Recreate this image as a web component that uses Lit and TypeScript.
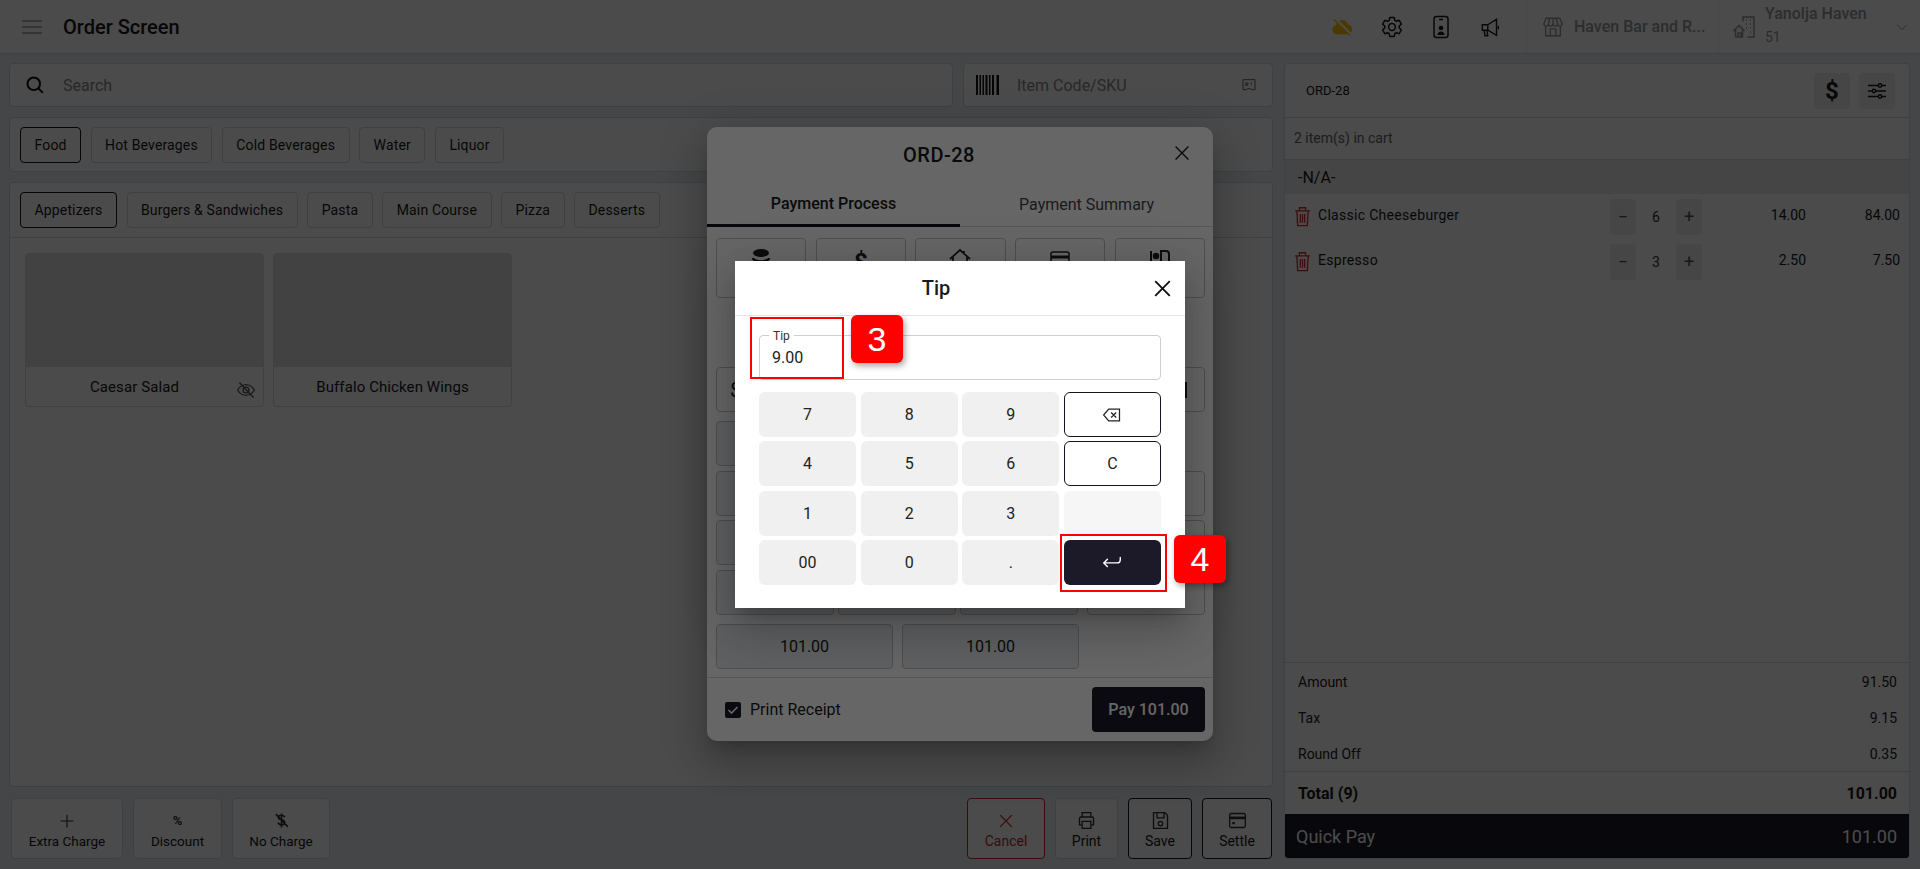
import { LitElement, css, html, svg } from "lit";
import { customElement } from "lit/decorators.js";

const icon = (size: number, body: unknown, cls = "") =>
  html`<svg class=${cls} width=${size} height=${size} viewBox="0 0 24 24" fill="none" stroke="currentColor" stroke-width="1.5">${body}</svg>`;

const gear = svg`<path d="M19.14 12.94c.04-.3.06-.61.06-.94 0-.32-.02-.64-.07-.94l2.03-1.58c.18-.14.23-.41.12-.61l-1.92-3.32c-.12-.22-.37-.29-.59-.22l-2.39.96c-.5-.38-1.03-.7-1.62-.94l-.36-2.54c-.04-.24-.24-.41-.48-.41h-3.84c-.24 0-.43.17-.47.41l-.36 2.54c-.59.24-1.13.57-1.62.94l-2.39-.96c-.22-.08-.47 0-.59.22L2.74 8.87c-.12.21-.08.47.12.61l2.03 1.58c-.05.3-.09.63-.09.94s.02.64.07.94l-2.03 1.58c-.18.14-.23.41-.12.61l1.92 3.32c.12.22.37.29.59.22l2.39-.96c.5.38 1.03.7 1.62.94l.36 2.54c.05.24.24.41.48.41h3.84c.24 0 .44-.17.47-.41l.36-2.54c.59-.24 1.13-.56 1.62-.94l2.39.96c.22.08.47 0 .59-.22l1.92-3.32c.12-.22.07-.47-.12-.61l-2.01-1.58z"/><circle cx="12" cy="12" r="3.4"/>`;
const cloudOff = svg`<path fill="currentColor" stroke="none" d="M6.5 20a5 5 0 0 1-1.2-9.85A7 7 0 0 1 12 4.5a6.6 6.6 0 0 1 6.3 4.6A5.5 5.5 0 0 1 18 20z"/><path d="M4 2.5 21.500 20" stroke="#fff" stroke-width="3"/><path d="M3 3.500 20.500 21" stroke-width="1.400"/>`;
const phone = svg`<rect x="5" y="1.5" width="14" height="21" rx="2.5"/><path d="M10 4.5h4"/><circle cx="12" cy="13" r="1.6" fill="currentColor"/><path d="M8.5 20c0-2.4 1.4-3.6 3.5-3.6s3.5 1.2 3.5 3.6z" fill="currentColor" stroke="none"/>`;
const megaphone = svg`<path d="M2.5 9.5h6v6h-6zM8.5 9.5 18 3.5v17.5l-9.5-5.5M20 10.5v4M4.5 15.5l1 6h3l-1-6"/>`;
const store = svg`<path d="M4 11v10.500h16V11M2 8.500 4.500 2.500h15L22 8.500a2.500 2.500 0 0 1-5 0 2.500 2.500 0 0 1-5 0 2.500 2.500 0 0 1-5 0 2.500 2.500 0 0 1-5 0zM7 8.500 8.500 2.500M12 8.500v-6M17 8.500l-1.500-6M9 21.500V14h6v7.500"/>`;
const building = svg`<path d="M1.500 16 7 10.500l5.500 5.500M3.500 14.500v7.500h7v-7.500M11 6.500V2h11v20h-6.500M14 5h1M18 5h1M14 9h1M18 9h1M14 13h1M18 13h1M18 17h1M6 22v-4h3v4"/>`;
const chevron = svg`<path d="m5 9 7 7 7-7"/>`;
const search = svg`<circle cx="10.500" cy="10.500" r="7.500" stroke-width="2.400"/><path d="m16 16 5.500 5.500" stroke-width="2.400"/>`;
const ticket = svg`<path d="M3 4h18v15h-5.500l-1-1.500h-5l-1 1.500H3z"/><path d="m8.500 8 .8 1.700 1.800.2-1.300 1.200.3 1.800-1.600-.9-1.600.9.300-1.800L5.900 9.900l1.800-.2zM15.500 8v3M15.500 13v.5"/>`;
const sliders = svg`<path d="M3 6.500h18M3 12h18M3 17.500h18"/><circle cx="15" cy="6.500" r="1.700" fill="#efefef"/><circle cx="9" cy="12" r="1.700" fill="#efefef"/><circle cx="15" cy="17.500" r="1.700" fill="#efefef"/>`;
const trash = svg`<path d="M3.500 5.500h17M8.500 5.500V2h7v3.500M5.500 5.500l1 17h11l1-17M9.500 9v10M12 9v10M14.500 9v10"/>`;
const eyeOff = svg`<path d="M2 12s3.600-6.500 10-6.500S22 12 22 12s-3.600 6.500-10 6.500S2 12 2 12z"/><circle cx="12" cy="12" r="3.500"/><path d="m4 3 17 18"/>`;
const plus = svg`<path d="M12 3.500v17M3.500 12h17"/>`;
const xMark = svg`<path d="m5 5 14 14M19 5 5 19"/>`;
const noDollar = svg`<path d="M16.500 7.500C16 5.500 14.300 4.500 12 4.500c-2.500 0-4.300 1.300-4.300 3.200 0 1.900 1.600 2.700 4.300 3.300 3 .7 4.500 1.700 4.500 3.800 0 2-1.900 3.300-4.500 3.300-2.500 0-4.200-1.100-4.800-3.200M12 2v20M4 3l17 18" stroke-width="2.200"/>`;
const printer = svg`<path d="M7 8V3h10v5M7 17H4V9.500A1.500 1.500 0 0 1 5.500 8h13A1.500 1.500 0 0 1 20 9.500V17h-3M7 13h10v8H7z"/>`;
const floppy = svg`<path d="M4 3h13l3 3v15H4zM8 3v6h8V3"/><circle cx="12" cy="15.500" r="2.500"/>`;
const card = svg`<rect x="3" y="4" width="18" height="16" rx="2"/><path d="M3 9h18" stroke-width="3"/><path d="M6 15h3" stroke-width="2.500"/>`;
const backspace = svg`<path d="M8 5h13v14H8l-6-7zM11 9l6 6M17 9l-6 6"/>`;
const enter = svg`<path d="M21 7v2.500a3.500 3.500 0 0 1-3.500 3.500H3M7 9l-4 4 4 4" stroke-linecap="round"/>`;
const coins = svg`<ellipse cx="12" cy="5" rx="8" ry="4" fill="currentColor" stroke="none"/><path d="M4 10c0 2 3.500 3.500 8 3.500s8-1.500 8-3.500M4 14c0 2 3.500 3.500 8 3.500s8-1.500 8-3.500" stroke-width="2.500"/>`;
const house = svg`<path d="M2 11 12 2l10 9M5 9v12h14V9M9 15h6M16 3v3" stroke-width="1.700"/>`;
const tableIcon = svg`<path d="M3 3v18M13 3h5a3 3 0 0 1 3 3v15h-8z" stroke-width="2"/><circle cx="8" cy="8" r="2.500" fill="currentColor"/>`;

const categories = ["Food", "Hot Beverages", "Cold Beverages", "Water", "Liquor"];
const subCategories = ["Appetizers", "Burgers & Sandwiches", "Pasta", "Main Course", "Pizza", "Desserts"];
const cartItems = [
  { name: "Classic Cheeseburger", qty: 6, price: "14.00", total: "84.00" },
  { name: "Espresso", qty: 3, price: "2.50", total: "7.50" },
];
const summary = [
  ["Amount", "91.50"],
  ["Tax", "9.15"],
  ["Round Off", "0.35"],
];

@customElement("app-root")
export class AppRoot extends LitElement {
  static styles = css`
    :host {
      display: block;
      position: relative;
      width: 1920px;
      height: 869px;
      overflow: hidden;
      background: #ebeff3;
      font-family: Roboto, "Liberation Sans", sans-serif;
      font-size: 14px;
      color: #1a1a1a;
    }

    svg {
      display: block;
      flex: none;
    }

    .topbar {
      height: 54px;
      box-sizing: border-box;
      background: #fff;
      border-bottom: 1px solid #d8dadc;
      display: flex;
      align-items: center;
      padding-left: 21px;
    }

    .menu {
      color: #666;
    }

    .title {
      font-size: 20px;
      font-weight: 500;
      margin-left: 20px;
      flex: 1;
    }

    .top-icons {
      display: flex;
      align-items: center;
      height: 100%;
    }

    .cloud {
      color: #ffc400;
      margin-right: 26.500px;
    }

    .gear {
      margin-right: 25.500px;
    }

    .phone {
      margin-right: 27px;
    }

    .mega {
      margin-right: 24px;
    }

    .tenant {
      height: 100%;
      display: flex;
      align-items: center;
      border-left: 1px solid #f0f0f0;
      color: #9a9a9a;
      box-sizing: border-box;
    }

    .store {
      width: 192px;
      padding-left: 15px;
      gap: 10px;
      font-size: 16px;
      font-weight: 500;
      white-space: nowrap;
    }

    .user {
      width: 202px;
      padding-left: 13px;
      gap: 9px;
    }

    .user-name {
      font-size: 16px;
      line-height: 20px;
      font-weight: 500;
      margin-top: -4px;
    }

    .user-id {
      font-size: 14px;
      line-height: 18px;
      margin-top: 4px;
    }

    .user-text {
      flex: 1;
    }

    .user svg:last-child {
      margin-right: 10px;
    }

    .layout {
      display: grid;
      grid-template-columns: 1264px 626px;
      gap: 11px;
      padding: 9px 10px 10px 9px;
      height: 815px;
      box-sizing: border-box;
    }

    .left {
      display: flex;
      flex-direction: column;
      gap: 10px;
      min-width: 0;
    }

    .box {
      background: #fff;
      border: 1px solid #d8dadc;
      border-radius: 4px;
      box-sizing: border-box;
    }

    .search-row {
      display: grid;
      grid-template-columns: 944px 310px;
      gap: 10px;
      height: 44px;
    }

    .search {
      display: flex;
      align-items: center;
      padding-left: 15px;
      gap: 18px;
      font-size: 16px;
      color: #8a8a8a;
    }

    .search svg {
      color: #111;
    }

    .sku {
      gap: 17px;
      padding: 0 15px 0 12px;
    }

    .sku-label {
      flex: 1;
    }

    .sku svg:last-child {
      color: #666;
    }

    .chips {
      display: flex;
      align-items: center;
      gap: 9.5px;
      padding: 0 10px;
      height: 55px;
      box-sizing: border-box;
      letter-spacing: 0.15px;
    }

    .chip {
      height: 36px;
      padding: 0 13.500px;
      box-sizing: border-box;
      display: flex;
      align-items: center;
      border: 1px solid #d8dadc;
      border-radius: 4px;
    }

    .chip.active {
      border-color: #16141f;
    }

    .products {
      flex: 1;
      display: flex;
      flex-direction: column;
    }

    .products .chips {
      border-bottom: 1px solid #d8dadc;
    }

    .cards {
      display: flex;
      gap: 9px;
      padding: 15px 15px;
    }

    .card {
      width: 239px;
      height: 154px;
      border: 1px solid #e0e0e0;
      border-radius: 4px;
      box-sizing: border-box;
      display: flex;
      flex-direction: column;
      overflow: hidden;
    }

    .card-img {
      height: 113px;
      background: #e2e2e2;
    }

    .card-name {
      flex: 1;
      display: flex;
      align-items: center;
      justify-content: center;
      position: relative;
      font-size: 15px;
      letter-spacing: 0.1px;
    }

    .card-name.has-flag {
      padding-right: 20px;
    }

    .hidden-icon {
      position: absolute;
      right: 7px;
      top: 13px;
      color: #555;
    }

    .actions {
      display: flex;
      height: 61px;
      margin-top: 1px;
    }

    .action {
      display: flex;
      flex-direction: column;
      align-items: center;
      justify-content: center;
      gap: 2px;
      padding-top: 2px;
      font-size: 14px;
      width: 100px;
      flex: none;
    }

    .action-sym {
      height: 20px;
      display: flex;
      align-items: center;
      font-weight: 700;
      font-size: 13px;
      color: #333;
    }

    .a-left {
      gap: 10px;
      margin: 0 0 0 2px;
      flex: 1;
    }

    .a-left .action {
      font-size: 13.500px;
    }

    .extra.extra {
      width: 112px;
    }

    .discount.discount {
      width: 89px;
    }

    .nocharge.nocharge {
      width: 98px;
    }

    .a-right {
      gap: 10px;
      margin-right: 1px;
      display: flex;
    }

    .cancel.cancel {
      width: 78px;
      border-color: #c62828;
      color: #c62828;
    }

    .cancel .action-sym {
      color: #c62828;
    }

    .print.print {
      width: 63px;
    }

    .save.save {
      width: 64px;
      border-color: #16141f;
    }

    .settle.settle {
      width: 70px;
      border-color: #16141f;
    }

    .cart {
      display: flex;
      flex-direction: column;
      overflow: hidden;
      position: relative;
    }

    .cart-head {
      height: 53px;
      flex: none;
      display: flex;
      align-items: center;
      gap: 9px;
      padding: 0 14px 0 21px;
      border-bottom: 1px solid #d8dadc;
      font-size: 13px;
    }

    .cart-head span {
      flex: 1;
    }

    .square {
      width: 36px;
      height: 36px;
      border-radius: 4px;
      background: #efefef;
      display: flex;
      align-items: center;
      justify-content: center;
      font-size: 24px;
      font-weight: 700;
    }

    .count {
      height: 42px;
      flex: none;
      display: flex;
      align-items: center;
      padding: 0 0 2px 9px;
      color: #666;
      border-bottom: 1px solid #d8dadc;
      box-sizing: border-box;
    }

    .group {
      height: 34px;
      flex: none;
      background: #ebebeb;
      display: flex;
      align-items: center;
      padding-left: 13px;
      font-size: 16px;
    }

    .row {
      height: 45px;
      display: flex;
      align-items: center;
      padding: 0 9px;
    }

    .row-trash {
      color: #d32f2f;
      margin: 0 5.500px 0 -2.500px;
    }

    .row-name {
      flex: 1;
      margin-top: -4px;
      letter-spacing: 0.3px;
    }

    .qty {
      width: 92px;
      display: flex;
      align-items: center;
      justify-content: space-between;
      color: #333;
    }

    .qty-btn {
      width: 26px;
      height: 36px;
      border-radius: 4px;
      background: #efefef;
      display: flex;
      align-items: center;
      justify-content: center;
      font-size: 18px;
      color: #555;
    }

    .row-price {
      width: 104px;
      text-align: right;
      margin-top: -4px;
    }

    .row-total {
      width: 94px;
      text-align: right;
      margin-top: -4px;
    }

    .spacer {
      flex: 1;
    }

    .sums {
      border-top: 1px solid #d8dadc;
      padding: 0 12px 0 13px;
    }

    .sum {
      height: 36px;
      box-sizing: border-box;
      padding-top: 2px;
      display: flex;
      align-items: center;
      justify-content: space-between;
      color: #222;
    }

    .total {
      height: 42px;
      display: flex;
      align-items: center;
      justify-content: space-between;
      border-top: 1px solid #d8dadc;
      padding: 0 12px 0 13px;
      font-size: 16px;
      font-weight: 700;
    }

    .quick {
      height: 44px;
      flex: none;
      background: #1c1a29;
      color: #fff;
      display: flex;
      align-items: center;
      justify-content: space-between;
      padding: 0 12px 0 11px;
      font-size: 18px;
    }

    .scrim {
      position: absolute;
      inset: 0;
      box-sizing: border-box;
      display: flex;
      align-items: center;
      justify-content: center;
    }

    .scrim-a {
      background: rgba(0, 0, 0, 0.265);
      padding-bottom: 1px;
    }

    .scrim-b {
      background: rgba(0, 0, 0, 0.6);
    }

    .modal {
      background: #fff;
      box-shadow: 0 11px 15px -7px rgba(0, 0, 0, 0.2), 0 24px 38px 3px rgba(0, 0, 0, 0.14),
        0 9px 46px 8px rgba(0, 0, 0, 0.12);
      display: flex;
      flex-direction: column;
      box-sizing: border-box;
    }

    .pay {
      width: 506px;
      height: 614px;
      border-radius: 10px;
      overflow: hidden;
    }

    .head {
      display: flex;
      align-items: center;
      flex: none;
    }

    .head-title {
      flex: 1;
      text-align: center;
      font-size: 20px;
      font-weight: 500;
    }

    .pay .head {
      height: 56px;
      padding-right: 20px;
    }

    .pay .head-title {
      letter-spacing: 0.5px;
    }

    .close {
      margin-top: -4px;
    }

    .tabs {
      height: 44px;
      flex: none;
      display: flex;
      border-bottom: 1px solid #d4d4d4;
      box-sizing: border-box;
    }

    .tab {
      flex: 1;
      display: flex;
      align-items: center;
      justify-content: center;
      font-size: 16px;
      color: #444;
    }

    .tab.active {
      font-weight: 500;
      color: #1a1a1a;
      border-bottom: 3px solid #16141f;
      margin-bottom: -1px;
    }

    .pay-body {
      flex: 1;
      padding: 11px 8px 0 9px;
    }

    .methods {
      display: grid;
      grid-template-columns: repeat(5, 1fr);
      gap: 9.5px;
    }

    .method {
      height: 60px;
      border: 1px solid #c4c4c4;
      border-radius: 4px;
      box-sizing: border-box;
      display: flex;
      justify-content: center;
      padding-top: 9px;
      font-size: 24px;
      font-weight: 700;
      color: #222;
    }

    .amount-row {
      margin-top: 69px;
      height: 45px;
      border: 1px solid #c4c4c4;
      border-radius: 4px;
      box-sizing: border-box;
      display: flex;
      align-items: center;
      justify-content: space-between;
      padding: 0 17px 0 13px;
      font-size: 20px;
    }

    .amount-row i {
      width: 2px;
      height: 16px;
      background: #222;
    }

    .presets {
      margin-top: 9px;
      display: grid;
      grid-template-columns: repeat(3, 118px) 123px;
      grid-auto-rows: 45px;
      column-gap: 4px;
      row-gap: 4.500px;
    }

    .preset {
      border: 1px solid #c4c4c4;
      border-radius: 4px;
      background: #eef1f4;
    }

    .preset.outline {
      background: none;
      margin-left: 5px;
    }

    .preset.gap {
      border: none;
      background: none;
    }

    .quick-amounts {
      margin-top: 9px;
      display: flex;
      gap: 9px;
    }

    .quick-amount {
      width: 177px;
      height: 45px;
      box-sizing: border-box;
      border: 1px solid #c4c4c4;
      border-radius: 4px;
      background: #eef1f4;
      display: flex;
      align-items: center;
      justify-content: center;
      font-size: 16px;
    }

    .pay-foot {
      height: 64px;
      flex: none;
      border-top: 1px solid #d4d4d4;
      display: flex;
      align-items: center;
      justify-content: space-between;
      padding: 0 8px 0 18px;
      box-sizing: border-box;
    }

    .check {
      display: flex;
      align-items: center;
      gap: 9px;
      font-size: 16px;
    }

    .box-check {
      width: 16px;
      height: 16px;
      border-radius: 2px;
      background: #1c1a29;
      color: #fff;
    }

    .pay-btn {
      width: 113px;
      height: 45px;
      border-radius: 4px;
      background: #1c1a29;
      color: #fff;
      display: flex;
      align-items: center;
      justify-content: center;
      font-size: 16px;
      font-weight: 500;
    }

    .tip {
      width: 450px;
      height: 347px;
    }

    .tip .head {
      height: 55px;
      padding-right: 10.500px;
      border-bottom: 1px solid #e4e4e4;
      box-sizing: border-box;
    }

    .tip .close {
      margin: 0 0 0 12.500px;
      color: #111;
      stroke-width: 1.800;
    }

    .tip-body {
      padding: 19px 24px 0;
    }

    .field {
      position: relative;
      height: 45px;
      box-sizing: border-box;
      border: 1px solid #cfcfcf;
      border-radius: 4px;
      display: flex;
      align-items: center;
      padding: 0 12px;
      font-size: 16px;
      color: #222;
    }

    .legend {
      position: absolute;
      left: 9px;
      top: -7px;
      padding: 0 4px;
      background: #fff;
      font-size: 12px;
      line-height: 14px;
      color: #333;
    }

    .keypad {
      margin-top: 12px;
      display: grid;
      grid-template-columns: repeat(4, 1fr);
      grid-auto-rows: 45px;
      column-gap: 4.500px;
      row-gap: 4.330px;
    }

    .key {
      background: #f0f0f0;
      border-radius: 6px;
      display: flex;
      align-items: center;
      justify-content: center;
      font-size: 16px;
      color: #222;
      box-sizing: border-box;
    }

    .key.line {
      background: #fff;
      border: 1px solid #16141f;
    }

    .key.blank {
      background: #f6f6f6;
    }

    .key.dark {
      background: #1c1a29;
      color: #fff;
    }

    .mark {
      position: absolute;
      border: 2px solid #f00;
      box-sizing: border-box;
    }

    .mark-tip {
      left: 750px;
      top: 317px;
      width: 94px;
      height: 62px;
    }

    .mark-enter {
      left: 1060px;
      top: 534px;
      width: 107px;
      height: 58px;
    }

    .badge {
      position: absolute;
      width: 52px;
      height: 48px;
      border-radius: 6px;
      background: #f00;
      color: #fff;
      font-family: "Liberation Sans", Arial, sans-serif;
      font-size: 34px;
      display: flex;
      align-items: center;
      justify-content: center;
      box-shadow: 2px 3px 6px rgba(0, 0, 0, 0.35);
    }

    .badge-3 {
      left: 851px;
      top: 315px;
    }

    .badge-4 {
      left: 1174px;
      top: 535px;
    }
  `;

  private topBar() {
    return html`<header class="topbar">
      <svg class="menu" width="22" height="22" viewBox="0 0 22 22" stroke="currentColor" stroke-width="1.200"><path d="M1 5h20M1 11h20M1 17h20" /></svg>
      <div class="title">Order Screen</div>
      <div class="top-icons">
        ${icon(22, cloudOff, "cloud")}
        ${icon(24, gear, "gear")}
        ${icon(24, phone, "phone")}
        ${icon(22, megaphone, "mega")}
        <div class="tenant store">${icon(22, store)}<span>Haven Bar and R...</span></div>
        <div class="tenant user">
          ${icon(24, building)}
          <div class="user-text">
            <div class="user-name">Yanolja Haven</div>
            <div class="user-id">51</div>
          </div>
          ${icon(16, chevron)}
        </div>
      </div>
    </header>`;
  }

  private leftPane() {
    return html`<section class="left">
      <div class="search-row">
        <div class="box search">${icon(20, search)}<span>Search</span></div>
        <div class="box search sku">
          <svg width="24" height="22" viewBox="0 0 24 22" fill="#111"><path d="M0 1h2v20H0zM3.500 1h1.500v20H3.500zM6.500 1H8v20H6.500zM9.500 1h2v20h-2zM13 1h1.500v20H13zM16 1h2v20h-2zM20.500 1H23v20h-2.500z" /></svg>
          <span class="sku-label">Item Code/SKU</span>
          ${icon(16, ticket)}
        </div>
      </div>
      <div class="box chips">
        ${categories.map((c, i) => html`<div class="chip ${i === 0 ? "active" : ""}">${c}</div>`)}
      </div>
      <div class="box products">
        <div class="chips">
          ${subCategories.map((c, i) => html`<div class="chip ${i === 0 ? "active" : ""}">${c}</div>`)}
        </div>
        <div class="cards">
          <div class="card">
            <div class="card-img"></div>
            <div class="card-name has-flag">Caesar Salad${icon(20, eyeOff, "hidden-icon")}</div>
          </div>
          <div class="card">
            <div class="card-img"></div>
            <div class="card-name">Buffalo Chicken Wings</div>
          </div>
        </div>
      </div>
      <div class="actions">
        <div class="actions a-left">
          <div class="box action extra"><div class="action-sym">${icon(18, plus)}</div>Extra Charge</div>
          <div class="box action discount"><div class="action-sym">%</div>Discount</div>
          <div class="box action nocharge"><div class="action-sym">${icon(17, noDollar)}</div>No Charge</div>
        </div>
        <div class="a-right">
          <div class="box action cancel"><div class="action-sym">${icon(20, xMark)}</div>Cancel</div>
          <div class="box action print"><div class="action-sym">${icon(21, printer)}</div>Print</div>
          <div class="box action save"><div class="action-sym">${icon(21, floppy)}</div>Save</div>
          <div class="box action settle"><div class="action-sym">${icon(21, card)}</div>Settle</div>
        </div>
      </div>
    </section>`;
  }

  private cart() {
    return html`<aside class="box cart">
      <div class="cart-head">
        <span>ORD-28</span>
        <div class="square">$</div>
        <div class="square">${icon(24, sliders)}</div>
      </div>
      <div class="count">2 item(s) in cart</div>
      <div class="group">-N/A-</div>
      ${cartItems.map(
        (item) => html`<div class="row">
          ${icon(21, trash, "row-trash")}
          <div class="row-name">${item.name}</div>
          <div class="qty">
            <div class="qty-btn">−</div>
            <span>${item.qty}</span>
            <div class="qty-btn">+</div>
          </div>
          <div class="row-price">${item.price}</div>
          <div class="row-total">${item.total}</div>
        </div>`
      )}
      <div class="spacer"></div>
      <div class="sums">
        ${summary.map(([k, v]) => html`<div class="sum"><span>${k}</span><span>${v}</span></div>`)}
      </div>
      <div class="total"><span>Total (9)</span><span>101.00</span></div>
      <div class="quick"><span>Quick Pay</span><span>101.00</span></div>
    </aside>`;
  }

  private paymentModal() {
    return html`<div class="modal pay">
      <div class="head">
        <div class="head-title">ORD-28</div>
        ${icon(22, xMark, "close")}
      </div>
      <div class="tabs">
        <div class="tab active">Payment Process</div>
        <div class="tab">Payment Summary</div>
      </div>
      <div class="pay-body">
        <div class="methods">
          <div class="method">${icon(24, coins)}</div>
          <div class="method">$</div>
          <div class="method">${icon(24, house)}</div>
          <div class="method">${icon(24, card)}</div>
          <div class="method">${icon(24, tableIcon)}</div>
        </div>
        <div class="amount-row"><span>$</span><i></i></div>
        <div class="presets">
          <div class="preset"></div>
          <div class="preset"></div>
          <div class="preset"></div>
          <div class="preset gap"></div>
          ${[0, 1, 2].map(
            () => html`<div class="preset"></div>
              <div class="preset"></div>
              <div class="preset"></div>
              <div class="preset outline"></div>`
          )}
        </div>
        <div class="quick-amounts">
          <div class="quick-amount">101.00</div>
          <div class="quick-amount">101.00</div>
        </div>
      </div>
      <div class="pay-foot">
        <div class="check">
          <div class="box-check">
            <svg width="16" height="16" viewBox="0 0 16 16" fill="none" stroke="currentColor" stroke-width="1.600"><path d="m3.500 8 3 3 6-6" /></svg>
          </div>
          Print Receipt
        </div>
        <div class="pay-btn">Pay 101.00</div>
      </div>
    </div>`;
  }

  private tipModal() {
    const keys = [
      ["7", "8", "9"],
      ["4", "5", "6"],
      ["1", "2", "3"],
      ["00", "0", "."],
    ];
    const side = [
      html`<div class="key line">${icon(20, backspace)}</div>`,
      html`<div class="key line">C</div>`,
      html`<div class="key blank"></div>`,
      html`<div class="key dark">${icon(22, enter)}</div>`,
    ];
    return html`<div class="modal tip">
      <div class="head">
        <div class="head-title">Tip</div>
        ${icon(25, xMark, "close")}
      </div>
      <div class="tip-body">
        <div class="field"><span class="legend">Tip</span>9.00</div>
        <div class="keypad">
          ${keys.map(
            (row, i) => html`${row.map((k) => html`<div class="key">${k}</div>`)}${side[i]}`
          )}
        </div>
      </div>
    </div>`;
  }

  render() {
    return html`
      ${this.topBar()}
      <main class="layout">${this.leftPane()}${this.cart()}</main>
      <div class="scrim scrim-a">${this.paymentModal()}</div>
      <div class="scrim scrim-b">${this.tipModal()}</div>
      <div class="mark mark-tip"></div>
      <div class="badge badge-3">3</div>
      <div class="mark mark-enter"></div>
      <div class="badge badge-4">4</div>
    `;
  }
}
